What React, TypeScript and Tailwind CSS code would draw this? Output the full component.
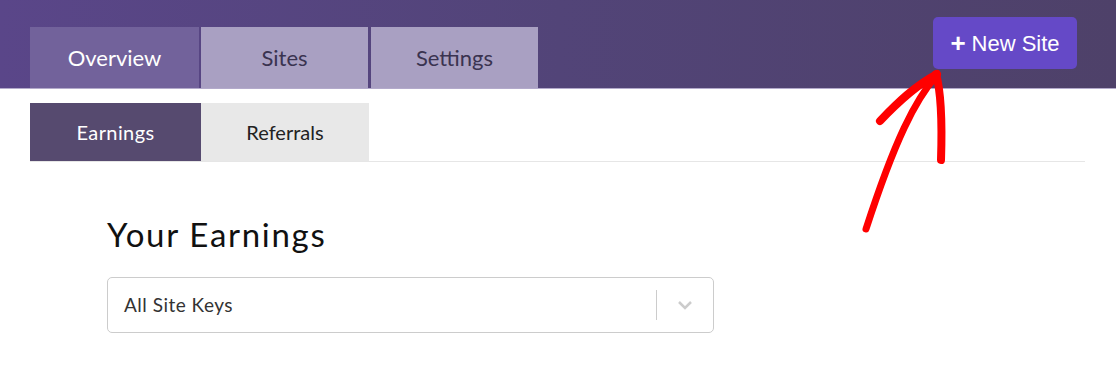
import React from "react";

export default function App() {
  const font = { fontFamily: "Lato, 'Open Sans', sans-serif" };
  return (
    <div className="relative w-[1116px] h-[380px] overflow-hidden bg-white" style={font}>
      {/* Header */}
      <div className="h-[89px] flex justify-between items-start pl-[30px] pr-[39px] bg-gradient-to-r from-[#5a4689] via-[#524478] to-[#4e4169] border-b border-[#b3aacb]">
        <div className="self-end flex gap-[2px]">
          <div className="w-[169px] h-[61px] bg-[#72629b] text-white text-[22px] flex items-center justify-center">
            Overview
          </div>
          <div className="w-[167px] h-[61px] bg-[#a9a0c2] text-[#3a3350] text-[22px] flex items-center justify-center">
            Sites
          </div>
          <div className="ml-[1px] w-[167px] h-[61px] bg-[#a9a0c2] text-[#3a3350] text-[22px] flex items-center justify-center">
            Settings
          </div>
        </div>
        <button
          className="mt-[17px] w-[144px] h-[52px] rounded-[5px] bg-[#6549c7] text-white text-[22px] flex items-center justify-center"
          style={{ fontFamily: "'Liberation Sans', Arial, sans-serif" }}
        >
          <span className="font-bold mr-[6px] text-[26px] leading-none">+</span>
          <span>New Site</span>
        </button>
      </div>

      {/* Sub tabs */}
      <div className="mt-[14px] ml-[30px] mr-[31px] flex border-b border-[#e6e6e6]">
        <div className="w-[171px] h-[58px] bg-[#564a6f] text-white text-[20px] tracking-[0.4px] flex items-center justify-center">
          Earnings
        </div>
        <div className="w-[168px] h-[58px] bg-[#e8e8e8] text-[#222] text-[20px] flex items-center justify-center">
          Referrals
        </div>
      </div>

      {/* Content */}
      <div className="ml-[107px] mt-[52px]">
        <h1 className="text-[33px] leading-[40px] tracking-[1.7px] text-[#111]">Your Earnings</h1>
        <div className="mt-[23px] w-[607px] h-[56px] border border-[#cccccc] rounded-[5px] flex items-center">
          <span className="ml-[16px] flex-1 text-[19px] tracking-[0.5px] text-[#333]">All Site Keys</span>
          <div className="w-px h-[30px] bg-[#cccccc]" />
          <div className="w-[56px] flex items-center justify-center">
            <svg width="16" height="10" viewBox="0 0 16 10">
              <path d="M2 2 L8 8 L14 2" fill="none" stroke="#cccccc" strokeWidth="2.5" />
            </svg>
          </div>
        </div>
      </div>

      {/* Red hand-drawn arrow */}
      <svg className="absolute left-0 top-0 pointer-events-none" width="1116" height="380">
        <g fill="none" stroke="#ff0000" strokeLinecap="round" strokeLinejoin="round">
          <path d="M880 121 C 898 102, 915 86, 937 74" strokeWidth="8" />
          <path d="M937 75 C 915 100, 895 140, 866 229" strokeWidth="7" />
          <path d="M936 74 C 942 95, 942 130, 941 160" strokeWidth="8" />
        </g>
      </svg>
    </div>
  );
}
